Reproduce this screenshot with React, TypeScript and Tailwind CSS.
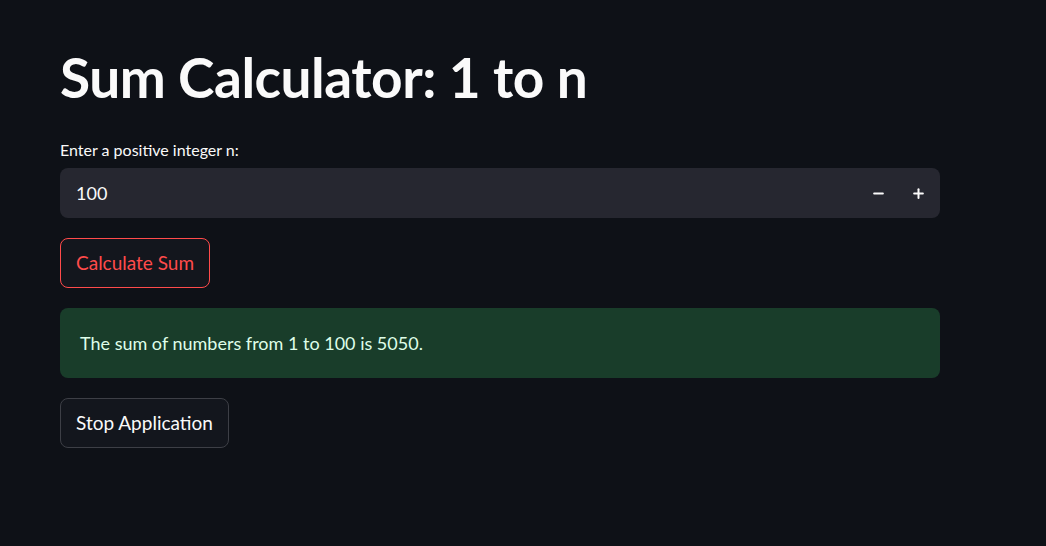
import { Minus, Plus } from 'lucide-react';

export default function App() {
  return (
    <div className="min-h-[546px] w-full bg-[#0e1117] text-[#fafafa]" style={{ fontFamily: 'Lato, "Open Sans", sans-serif' }}>
      <div className="flex w-[940px] flex-col gap-5 pl-[60px] pt-[44px]">
        <h1 className="mb-[10px] text-[55px] font-bold leading-[66px] tracking-[-0.5px]">Sum Calculator: 1 to n</h1>

        <div className="flex flex-col gap-[8px]">
          <label className="text-[16px] leading-[20px]">Enter a positive integer n:</label>
          <div className="flex h-[50px] items-center rounded-lg bg-[#262730]">
            <span className="flex-1 pl-4 text-[18px]">100</span>
            <button className="flex h-full w-10 items-center justify-center">
              <Minus className="h-[15px] w-[15px]" strokeWidth={3.2} />
            </button>
            <button className="mr-[2px] flex h-full w-10 items-center justify-center">
              <Plus className="h-[15px] w-[15px]" strokeWidth={3.2} />
            </button>
          </div>
        </div>

        <div>
          <button className="h-[50px] rounded-lg border border-[#ff4b4b] bg-[#13161d] px-[15px] text-[19px] text-[#ff4b4b]">
            Calculate Sum
          </button>
        </div>

        <div className="flex h-[70px] items-center rounded-lg bg-[#193d2a] px-5 text-[18px] text-[#dffde9]">
          The sum of numbers from 1 to 100 is 5050.
        </div>

        <div>
          <button className="h-[50px] rounded-lg border border-[#3d3f46] bg-[#13161d] px-[15px] text-[19px] text-[#fafafa]">
            Stop Application
          </button>
        </div>
      </div>
    </div>
  );
}
